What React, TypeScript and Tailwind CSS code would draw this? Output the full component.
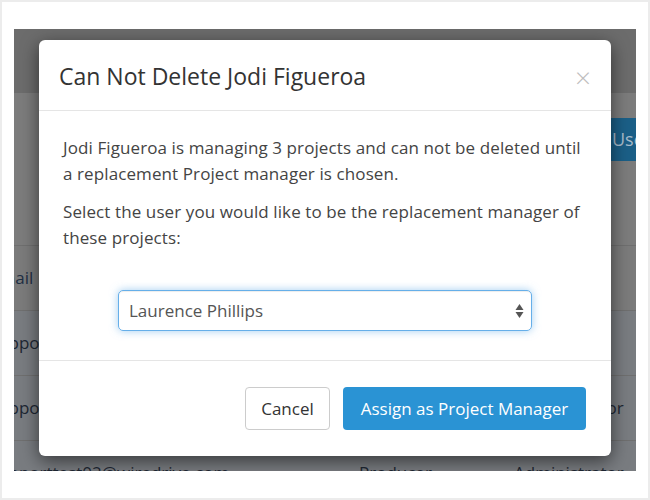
import React from "react";

const font = { fontFamily: '"Open Sans", "Noto Sans", Arial, sans-serif' };

function Row({
  email,
  role,
  level,
  first,
}: {
  email: string;
  role?: string;
  level?: string;
  first?: boolean;
}) {
  return (
    <div
      className={`flex h-[65px] shrink-0 items-center border-t border-[#6f6f6f] text-[17px] ${
        first ? "bg-[#7b7b7b] text-[#1f2f44]" : "bg-[#797c80] text-[#1e2733]"
      }`}
    >
      <div className="w-[369px] shrink-0 -ml-[24px] whitespace-nowrap">{email}</div>
      <div className="w-[155px] shrink-0 whitespace-nowrap">{role}</div>
      <div className="whitespace-nowrap">{level}</div>
    </div>
  );
}

export default function App() {
  return (
    <div
      className="w-[650px] h-[500px] bg-white border-2 border-[#ececec] overflow-hidden"
      style={font}
    >
      <div className="ml-[12px] mt-[27px] w-[622px] h-[442px] relative overflow-hidden bg-[#7b7b7b] flex flex-col">
        {/* underlying page */}
        <div className="h-[64px] shrink-0 bg-[#6c6c6c]" />
        <div className="h-[152px] shrink-0 bg-[#7c7c7c] pt-[25px]">
          <div className="ml-[586px] w-[120px] h-[43px] rounded-[4px] bg-[#1b5f87] text-[#a8bccb] text-[18px] flex items-center pl-[12px]">
            Users
          </div>
        </div>
        <Row email="Email" first />
        <Row email="supporttest01@wiredrive.com" />
        <Row email="supporttest03@wiredrive.com" level="Administrator" />
        <Row email="supporttest02@wiredrive.com" role="Producer" level="Administrator" />

        {/* modal */}
        <div className="absolute left-[25px] top-[11px] w-[572px] h-[416px] bg-white rounded-[6px] shadow-[0_5px_18px_rgba(0,0,0,0.55)] flex flex-col">
          <div className="h-[71px] shrink-0 border-b border-[#e5e5e5] flex items-center justify-between pl-[20px] pr-[20px]">
            <h1 className="text-[23px] text-[#333] leading-none pt-[3px]">
              Can Not Delete Jodi Figueroa
            </h1>
            <span className="text-[28px] leading-none text-[#bdbdbd] font-light pt-[4px]">×</span>
          </div>
          <div className="flex-1 px-[24px] pt-[24px] text-[17px] leading-[26px] tracking-[0.1px] text-[#444]">
            <p>
              Jodi Figueroa is managing 3 projects and can not be deleted until a
              replacement Project manager is chosen.
            </p>
            <p className="mt-[12px]">
              Select the user you would like to be the replacement manager of these
              projects:
            </p>
            <div className="mt-[39px] mx-auto w-[414px] h-[41px] rounded-[5px] border border-[#66afe9] shadow-[inset_0_1px_1px_rgba(0,0,0,0.075),0_0_8px_rgba(102,175,233,0.6)] flex items-center justify-between pl-[10px] pr-[7px] text-[#555] tracking-normal">
              <span>Laurence Phillips</span>
              <svg width="9" height="16" viewBox="0 0 9 16">
                <path d="M4.5 1 L8.5 7 L0.5 7 Z" fill="#555" />
                <path d="M0.5 9 L8.5 9 L4.5 15 Z" fill="#555" />
              </svg>
            </div>
          </div>
          <div className="h-[96px] shrink-0 border-t border-[#e5e5e5] flex items-center justify-end gap-[13px] pr-[25px]">
            <button className="h-[43px] w-[85px] rounded-[4px] border border-[#cccccc] bg-white text-[17px] text-[#333]">
              Cancel
            </button>
            <button className="h-[43px] w-[243px] rounded-[4px] bg-[#2a93d4] text-[17px] text-white">
              Assign as Project Manager
            </button>
          </div>
        </div>
      </div>
    </div>
  );
}
